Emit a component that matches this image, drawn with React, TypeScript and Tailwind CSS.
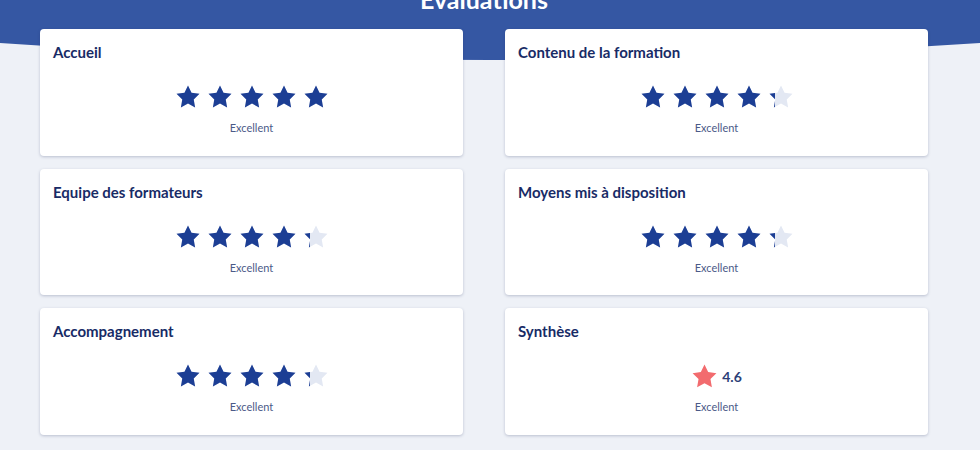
const ratings = [
  { title: "Accueil", score: 5 },
  { title: "Contenu de la formation", score: 4.3 },
  { title: "Equipe des formateurs", score: 4.3 },
  { title: "Moyens mis à disposition", score: 4.3 },
  { title: "Accompagnement", score: 4.3 },
];

const STAR =
  "M12 1.3l3.25 6.7 7.35 1.05-5.3 5.2 1.27 7.35L12 18.1l-6.57 3.5 1.27-7.35-5.3-5.2L8.75 8z";

function Star({ className }: { className: string }) {
  return (
    <svg viewBox="0 0 24 24" className={className}>
      <path d={STAR} fill="currentColor" />
    </svg>
  );
}

function Stars({ score }: { score: number }) {
  return (
    <div className="flex items-center gap-[6px]">
      {[0, 1, 2, 3, 4].map((i) => {
        const fill = Math.max(0, Math.min(1, score - i));
        return (
          <div key={i} className="relative h-[26px] w-[26px]">
            <Star className="h-[26px] w-[26px] text-[#e3e8f3]" />
            <div
              className="absolute left-0 top-0 h-[26px] overflow-hidden"
              style={{ width: `${fill * 26}px` }}
            >
              <Star className="h-[26px] w-[26px] text-[#1c3e94]" />
            </div>
          </div>
        );
      })}
    </div>
  );
}

function Card({ title, children }: { title: string; children: React.ReactNode }) {
  return (
    <div className="flex h-[126.5px] flex-col rounded-[4px] bg-white px-[13px] pt-[13px] shadow-[0_1px_3px_rgba(30,45,90,0.25)]">
      <h3 className="text-[15px] font-bold leading-[20px] text-[#182b66]">{title}</h3>
      <div className="mt-[22px] flex flex-col items-center">
        {children}
        <p className="mt-[10px] text-[11px] leading-[16px] text-[#4b5a88]">Excellent</p>
      </div>
    </div>
  );
}

export default function App() {
  return (
    <div
      className="relative h-[450px] w-[980px] overflow-hidden bg-[#eef1f7]"
      style={{ fontFamily: "Lato, 'Open Sans', sans-serif" }}
    >
      <svg className="absolute left-0 top-0" width="980" height="64" viewBox="0 0 980 64">
        <path d="M0 0H980V43Q490 77 0 43Z" fill="#3557a3" />
      </svg>
      <div className="relative">
        <h2 className="-mt-[15px] pr-[12px] text-center text-[25px] font-bold leading-[28px] text-white">
          Evaluations
        </h2>
        <div className="ml-[40px] mt-[16px] grid w-[888px] grid-cols-2 gap-x-[42px] gap-y-[13px]">
          {ratings.map((r) => (
            <Card key={r.title} title={r.title}>
              <Stars score={r.score} />
            </Card>
          ))}
          <Card title="Synthèse">
            <div className="flex h-[26px] items-center gap-[4px]">
              <Star className="h-[27px] w-[27px] text-[#f26b6e]" />
              <span className="text-[14px] font-bold text-[#2c3f78]">4.6</span>
            </div>
          </Card>
        </div>
      </div>
    </div>
  );
}
